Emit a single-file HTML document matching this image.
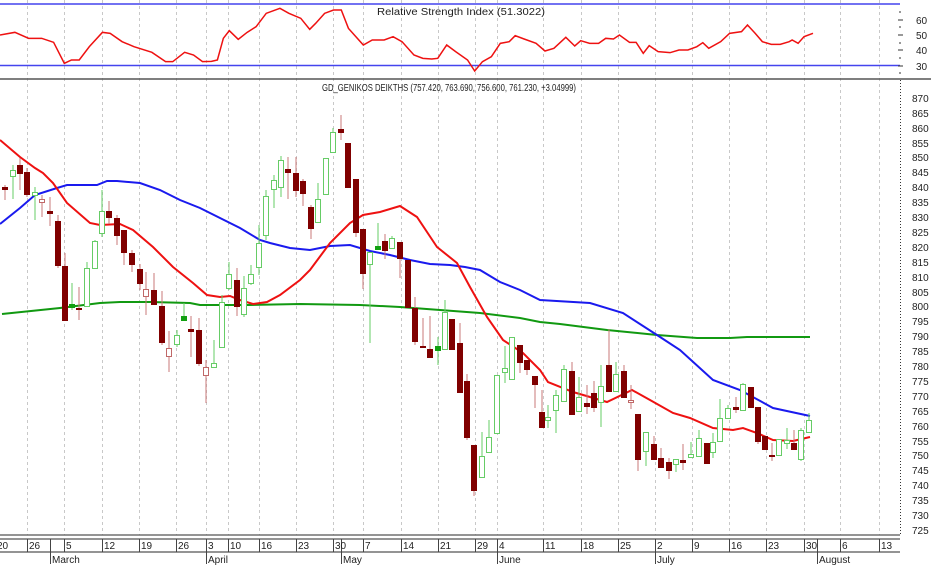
<!DOCTYPE html>
<html><head><meta charset="utf-8"><style>
html,body{margin:0;padding:0;background:#fff;}
svg{display:block;font-family:"Liberation Sans",sans-serif;}
.lbl{font-size:10px;fill:#222;}
.d{fill:#800000;stroke:#800000;stroke-width:1}
.g{fill:#fff;stroke:#66cc66;stroke-width:1}
.gf{fill:#11a011;stroke:#11a011;stroke-width:1}
.p{fill:#fff;stroke:#c06868;stroke-width:1}
.wd{stroke:#c87878;stroke-width:1}
.wg{stroke:#66cc66;stroke-width:1}
</style></head><body>
<svg width="931" height="566" viewBox="0 0 931 566" xmlns="http://www.w3.org/2000/svg">
<rect width="931" height="566" fill="#fff"/>
<!-- grid -->
<g stroke="#c8c8c8" stroke-width="1" stroke-dasharray="3,3">
<line x1="27.5" y1="0" x2="27.5" y2="535"/><line x1="64.5" y1="0" x2="64.5" y2="535"/><line x1="102.5" y1="0" x2="102.5" y2="535"/><line x1="139.5" y1="0" x2="139.5" y2="535"/><line x1="176.5" y1="0" x2="176.5" y2="535"/><line x1="206.5" y1="0" x2="206.5" y2="535"/><line x1="228.5" y1="0" x2="228.5" y2="535"/><line x1="259.5" y1="0" x2="259.5" y2="535"/><line x1="296.5" y1="0" x2="296.5" y2="535"/><line x1="333.5" y1="0" x2="333.5" y2="535"/><line x1="363.5" y1="0" x2="363.5" y2="535"/><line x1="401.5" y1="0" x2="401.5" y2="535"/><line x1="438.5" y1="0" x2="438.5" y2="535"/><line x1="475.5" y1="0" x2="475.5" y2="535"/><line x1="497.5" y1="0" x2="497.5" y2="535"/><line x1="543.5" y1="0" x2="543.5" y2="535"/><line x1="581.5" y1="0" x2="581.5" y2="535"/><line x1="618.5" y1="0" x2="618.5" y2="535"/><line x1="655.5" y1="0" x2="655.5" y2="535"/><line x1="692.5" y1="0" x2="692.5" y2="535"/><line x1="729.5" y1="0" x2="729.5" y2="535"/><line x1="766.5" y1="0" x2="766.5" y2="535"/><line x1="804.5" y1="0" x2="804.5" y2="535"/><line x1="840.5" y1="0" x2="840.5" y2="535"/><line x1="879.5" y1="0" x2="879.5" y2="535"/>
</g>
<!-- RSI panel -->
<line x1="0" y1="4" x2="900" y2="4" stroke="#4444ee" stroke-width="1.5"/>
<line x1="0" y1="65.5" x2="900" y2="65.5" stroke="#4444ee" stroke-width="1.5"/>
<line x1="0" y1="79" x2="931" y2="79" stroke="#555" stroke-width="1.5"/>
<text x="461" y="15" class="lbl" text-anchor="middle" textLength="168" lengthAdjust="spacingAndGlyphs">Relative Strength Index (51.3022)</text>
<g transform="scale(0.5956,0.3333)">
<polyline fill="none" stroke="#ee1111" stroke-width="1.5" vector-effect="non-scaling-stroke" points="0,105 25,97 48,115 70,115 90,127 108,190 120,180 133,180 150,140 172,97 185,100 205,125 225,140 255,157 278,185 290,185 310,157 325,165 340,185 355,184 365,180 375,115 385,92 400,118 415,97 430,80 447,40 470,25 485,40 505,55 520,88 530,70 545,40 560,30 573,30 585,85 610,135 625,120 645,120 660,110 675,125 695,165 710,175 725,177 735,175 750,135 765,155 785,180 797,213 810,185 825,170 840,130 855,125 865,107 880,117 900,130 915,153 930,145 950,112 965,138 975,122 990,130 1005,130 1017,115 1030,117 1040,105 1057,127 1068,127 1080,160 1090,137 1105,155 1125,158 1140,150 1155,150 1170,140 1180,128 1190,145 1210,125 1225,100 1245,95 1255,75 1268,100 1280,125 1295,133 1310,133 1325,125 1330,120 1340,130 1350,110 1365,100"/>
</g>
<g class="lbl" text-anchor="start">
<text x="916" y="24">60</text><text x="916" y="39">50</text><text x="916" y="54">40</text><text x="916" y="70">30</text>
</g>
<g stroke="#333" stroke-width="1">
<line x1="898" y1="20" x2="903" y2="20"/><line x1="898" y1="35" x2="903" y2="35"/><line x1="898" y1="50" x2="903" y2="50"/><line x1="898" y1="66" x2="903" y2="66"/>
<line x1="899" y1="12" x2="901" y2="12"/><line x1="899" y1="27" x2="901" y2="27"/><line x1="899" y1="43" x2="901" y2="43"/><line x1="899" y1="58" x2="901" y2="58"/><line x1="899" y1="73" x2="901" y2="73"/>
</g>
<!-- main title -->
<text x="449" y="91" class="lbl" text-anchor="middle" textLength="254" lengthAdjust="spacingAndGlyphs">GD_GENIKOS DEIKTHS (757.420, 763.690, 756.600, 761.230, +3.04999)</text>
<!-- price axis -->
<line x1="900.5" y1="80" x2="900.5" y2="535" stroke="#333" stroke-width="1" stroke-dasharray="1,2"/>
<g class="lbl">
<text x="912" y="102">870</text><text x="912" y="117">865</text><text x="912" y="132">860</text><text x="912" y="147">855</text><text x="912" y="161">850</text><text x="912" y="176">845</text><text x="912" y="191">840</text><text x="912" y="206">835</text><text x="912" y="221">830</text><text x="912" y="236">825</text><text x="912" y="251">820</text><text x="912" y="266">815</text><text x="912" y="281">810</text><text x="912" y="296">805</text><text x="912" y="310">800</text><text x="912" y="325">795</text><text x="912" y="340">790</text><text x="912" y="355">785</text><text x="912" y="370">780</text><text x="912" y="385">775</text><text x="912" y="400">770</text><text x="912" y="415">765</text><text x="912" y="430">760</text><text x="912" y="445">755</text><text x="912" y="459">750</text><text x="912" y="474">745</text><text x="912" y="489">740</text><text x="912" y="504">735</text><text x="912" y="519">730</text><text x="912" y="534">725</text>
</g>
<!-- moving averages -->
<polyline fill="none" stroke="#119911" stroke-width="2" points="2,314 60,308 100,303 120,302 150,302 190,303 200,305 250,305 300,304 360,305 400,307 440,310 480,313 520,318 540,322 560,324 607,330 657,335 697,338 730,338 747,337 810,337"/>
<polyline fill="none" stroke="#1a1aee" stroke-width="2" points="0,224 20,208 35,195 57,188 67,185 97,185 107,181 117,181 140,183 160,190 180,200 200,208 220,218 240,228 260,240 270,243 290,248 310,250 330,246 350,245 370,251 390,255 410,260 430,264 450,265 465,267 480,270 500,282 520,290 540,300 590,303 623,313 657,335 680,350 713,380 740,390 773,408 810,416"/>
<polyline fill="none" stroke="#ee1111" stroke-width="2" points="0,140 20,157 35,168 43,173 53,183 67,203 90,223 100,225 120,224 133,230 153,247 173,267 193,283 207,295 220,297 230,296 240,300 253,304 267,302 280,295 300,280 310,270 330,243 350,223 363,215 380,212 400,206 417,217 437,247 457,263 470,287 487,317 503,340 523,353 540,370 548,382 573,392 607,402 632,390 650,400 673,413 690,418 713,428 733,430 743,428 757,433 773,440 793,441 810,437"/>
<!-- candles -->
<g>
<line class="wd" x1="5" y1="185" x2="5" y2="200"/><rect class="d" x="2.5" y="187.5" width="5" height="2"/>
<line class="wg" x1="13" y1="165" x2="13" y2="199"/><rect class="g" x="10.5" y="170.5" width="5" height="6"/>
<line class="wd" x1="20" y1="158" x2="20" y2="190"/><rect class="d" x="17.5" y="165.5" width="5" height="8"/>
<line class="wd" x1="27" y1="168" x2="27" y2="197"/><rect class="d" x="24.5" y="172.5" width="5" height="22"/>
<line class="wg" x1="35" y1="187" x2="35" y2="220"/><rect class="g" x="32.5" y="192.5" width="5" height="3"/>
<line class="wd" x1="42" y1="195" x2="42" y2="217"/><rect class="p" x="39.5" y="199.5" width="5" height="3"/>
<line class="wd" x1="50" y1="197" x2="50" y2="226"/><rect class="d" x="47.5" y="211.5" width="5" height="2"/>
<line class="wd" x1="58" y1="215" x2="58" y2="268"/><rect class="d" x="55.5" y="221.5" width="5" height="44"/>
<line class="wd" x1="65" y1="253" x2="65" y2="321"/><rect class="d" x="62.5" y="266.5" width="5" height="54"/>
<line class="wg" x1="72" y1="283" x2="72" y2="310"/><rect class="gf" x="69.5" y="304.5" width="5" height="3"/>
<line class="wd" x1="79" y1="287" x2="79" y2="320"/><rect class="d" x="76.5" y="308.5" width="5" height="1"/>
<line class="wg" x1="87" y1="262" x2="87" y2="307"/><rect class="g" x="84.5" y="268.5" width="5" height="38"/>
<line class="wg" x1="95" y1="240" x2="95" y2="268"/><rect class="g" x="92.5" y="241.5" width="5" height="27"/>
<line class="wg" x1="102" y1="190" x2="102" y2="237"/><rect class="g" x="99.5" y="211.5" width="5" height="22"/>
<line class="wd" x1="109" y1="201" x2="109" y2="224"/><rect class="d" x="106.5" y="211.5" width="5" height="6"/>
<line class="wd" x1="117" y1="215" x2="117" y2="245"/><rect class="d" x="114.5" y="218.5" width="5" height="17"/>
<line class="wd" x1="124" y1="230" x2="124" y2="265"/><rect class="d" x="121.5" y="230.5" width="5" height="22"/>
<line class="wd" x1="132" y1="250" x2="132" y2="272"/><rect class="d" x="129.5" y="253.5" width="5" height="11"/>
<line class="wd" x1="140" y1="264" x2="140" y2="290"/><rect class="d" x="137.5" y="269.5" width="5" height="14"/>
<line class="wd" x1="146" y1="272" x2="146" y2="315"/><rect class="p" x="143.5" y="289.5" width="5" height="7"/>
<line class="wd" x1="154" y1="273" x2="154" y2="305"/><rect class="d" x="151.5" y="290.5" width="5" height="14"/>
<line class="wd" x1="162" y1="291" x2="162" y2="345"/><rect class="d" x="159.5" y="306.5" width="5" height="36"/>
<line class="wd" x1="169" y1="331" x2="169" y2="372"/><rect class="p" x="166.5" y="348.5" width="5" height="8"/>
<line class="wg" x1="177" y1="330" x2="177" y2="347"/><rect class="g" x="174.5" y="335.5" width="5" height="9"/>
<line class="wg" x1="184" y1="303" x2="184" y2="320"/><rect class="gf" x="181.5" y="316.5" width="5" height="4"/>
<line class="wd" x1="191" y1="316" x2="191" y2="357"/><rect class="d" x="188.5" y="329.5" width="5" height="2"/>
<line class="wd" x1="199" y1="318" x2="199" y2="366"/><rect class="d" x="196.5" y="330.5" width="5" height="33"/>
<line class="wd" x1="206" y1="360" x2="206" y2="403"/><rect class="p" x="203.5" y="367.5" width="5" height="8"/>
<line class="wg" x1="214" y1="340" x2="214" y2="367"/><rect class="g" x="211.5" y="363.5" width="5" height="4"/>
<line class="wg" x1="222" y1="295" x2="222" y2="347"/><rect class="g" x="219.5" y="302.5" width="5" height="45"/>
<line class="wg" x1="229" y1="262" x2="229" y2="290"/><rect class="g" x="226.5" y="274.5" width="5" height="14"/>
<line class="wd" x1="237" y1="268" x2="237" y2="316"/><rect class="d" x="234.5" y="280.5" width="5" height="26"/>
<line class="wg" x1="244" y1="276" x2="244" y2="317"/><rect class="g" x="241.5" y="288.5" width="5" height="26"/>
<line class="wg" x1="251" y1="265" x2="251" y2="285"/><rect class="g" x="248.5" y="274.5" width="5" height="9"/>
<line class="wg" x1="259" y1="225" x2="259" y2="275"/><rect class="g" x="256.5" y="243.5" width="5" height="24"/>
<line class="wg" x1="266" y1="190" x2="266" y2="240"/><rect class="g" x="263.5" y="196.5" width="5" height="39"/>
<line class="wg" x1="274" y1="175" x2="274" y2="208"/><rect class="g" x="271.5" y="180.5" width="5" height="9"/>
<line class="wg" x1="281" y1="156" x2="281" y2="197"/><rect class="g" x="278.5" y="160.5" width="5" height="27"/>
<line class="wd" x1="288" y1="157" x2="288" y2="199"/><rect class="d" x="285.5" y="169.5" width="5" height="3"/>
<line class="wd" x1="296" y1="157" x2="296" y2="197"/><rect class="d" x="293.5" y="173.5" width="5" height="17"/>
<line class="wd" x1="303" y1="179" x2="303" y2="206"/><rect class="d" x="300.5" y="181.5" width="5" height="12"/>
<line class="wd" x1="311" y1="205" x2="311" y2="239"/><rect class="d" x="308.5" y="207.5" width="5" height="21"/>
<line class="wg" x1="318" y1="183" x2="318" y2="222"/><rect class="g" x="315.5" y="199.5" width="5" height="23"/>
<line class="wg" x1="326" y1="158" x2="326" y2="194"/><rect class="g" x="323.5" y="158.5" width="5" height="36"/>
<line class="wg" x1="333" y1="128" x2="333" y2="152"/><rect class="g" x="330.5" y="132.5" width="5" height="20"/>
<line class="wd" x1="341" y1="115" x2="341" y2="140"/><rect class="d" x="338.5" y="129.5" width="5" height="3"/>
<line class="wd" x1="348" y1="143" x2="348" y2="187"/><rect class="d" x="345.5" y="143.5" width="5" height="44"/>
<line class="wd" x1="356" y1="179" x2="356" y2="237"/><rect class="d" x="353.5" y="179.5" width="5" height="53"/>
<line class="wd" x1="363" y1="229" x2="363" y2="289"/><rect class="d" x="360.5" y="229.5" width="5" height="44"/>
<line class="wg" x1="370" y1="252" x2="370" y2="343"/><rect class="g" x="367.5" y="252.5" width="5" height="12"/>
<line class="wg" x1="378" y1="223" x2="378" y2="250"/><rect class="gf" x="375.5" y="246.5" width="5" height="3"/>
<line class="wd" x1="385" y1="234" x2="385" y2="259"/><rect class="d" x="382.5" y="241.5" width="5" height="9"/>
<line class="wg" x1="392" y1="236" x2="392" y2="248"/><rect class="g" x="389.5" y="238.5" width="5" height="10"/>
<line class="wd" x1="400" y1="242" x2="400" y2="278"/><rect class="d" x="397.5" y="242.5" width="5" height="16"/>
<line class="wd" x1="408" y1="260" x2="408" y2="307"/><rect class="d" x="405.5" y="260.5" width="5" height="47"/>
<line class="wd" x1="415" y1="297" x2="415" y2="345"/><rect class="d" x="412.5" y="308.5" width="5" height="33"/>
<line class="wd" x1="423" y1="318" x2="423" y2="348"/><rect class="d" x="420.5" y="346.5" width="5" height="1"/>
<line class="wd" x1="430" y1="316" x2="430" y2="358"/><rect class="d" x="427.5" y="349.5" width="5" height="8"/>
<line class="wg" x1="438" y1="337" x2="438" y2="365"/><rect class="gf" x="435.5" y="346.5" width="5" height="4"/>
<line class="wg" x1="445" y1="300" x2="445" y2="349"/><rect class="g" x="442.5" y="312.5" width="5" height="37"/>
<line class="wd" x1="452" y1="319" x2="452" y2="349"/><rect class="d" x="449.5" y="319.5" width="5" height="30"/>
<line class="wd" x1="460" y1="323" x2="460" y2="392"/><rect class="d" x="457.5" y="343.5" width="5" height="49"/>
<line class="wd" x1="467" y1="374" x2="467" y2="440"/><rect class="d" x="464.5" y="381.5" width="5" height="56"/>
<line class="wd" x1="474" y1="445" x2="474" y2="496"/><rect class="d" x="471.5" y="445.5" width="5" height="45"/>
<line class="wg" x1="482" y1="432" x2="482" y2="477"/><rect class="g" x="479.5" y="456.5" width="5" height="21"/>
<line class="wg" x1="489" y1="420" x2="489" y2="452"/><rect class="g" x="486.5" y="437.5" width="5" height="15"/>
<line class="wg" x1="497" y1="375" x2="497" y2="433"/><rect class="g" x="494.5" y="375.5" width="5" height="58"/>
<line class="wg" x1="505" y1="346" x2="505" y2="383"/><rect class="g" x="502.5" y="368.5" width="5" height="4"/>
<line class="wg" x1="512" y1="337" x2="512" y2="379"/><rect class="g" x="509.5" y="337.5" width="5" height="42"/>
<line class="wd" x1="520" y1="345" x2="520" y2="373"/><rect class="d" x="517.5" y="345.5" width="5" height="17"/>
<line class="wd" x1="527" y1="360" x2="527" y2="375"/><rect class="d" x="524.5" y="360.5" width="5" height="9"/>
<line class="wd" x1="535" y1="376" x2="535" y2="408"/><rect class="d" x="532.5" y="376.5" width="5" height="8"/>
<line class="wd" x1="542" y1="390" x2="542" y2="427"/><rect class="d" x="539.5" y="412.5" width="5" height="15"/>
<line class="wg" x1="548" y1="405" x2="548" y2="428"/><rect class="g" x="545.5" y="417.5" width="5" height="3"/>
<line class="wg" x1="556" y1="390" x2="556" y2="433"/><rect class="g" x="553.5" y="395.5" width="5" height="15"/>
<line class="wg" x1="564" y1="365" x2="564" y2="401"/><rect class="g" x="561.5" y="369.5" width="5" height="32"/>
<line class="wd" x1="572" y1="362" x2="572" y2="414"/><rect class="d" x="569.5" y="371.5" width="5" height="43"/>
<line class="wg" x1="579" y1="377" x2="579" y2="412"/><rect class="g" x="576.5" y="397.5" width="5" height="14"/>
<line class="wd" x1="587" y1="385" x2="587" y2="414"/><rect class="d" x="584.5" y="403.5" width="5" height="3"/>
<line class="wd" x1="594" y1="381" x2="594" y2="412"/><rect class="d" x="591.5" y="393.5" width="5" height="14"/>
<line class="wg" x1="601" y1="365" x2="601" y2="427"/><rect class="g" x="598.5" y="386.5" width="5" height="16"/>
<line class="wd" x1="609" y1="329" x2="609" y2="392"/><rect class="d" x="606.5" y="365.5" width="5" height="26"/>
<line class="wg" x1="616" y1="362" x2="616" y2="391"/><rect class="g" x="613.5" y="374.5" width="5" height="17"/>
<line class="wd" x1="624" y1="365" x2="624" y2="397"/><rect class="d" x="621.5" y="371.5" width="5" height="26"/>
<line class="wd" x1="631" y1="385" x2="631" y2="409"/><rect class="p" x="628.5" y="400.5" width="5" height="2"/>
<line class="wd" x1="638" y1="414" x2="638" y2="471"/><rect class="d" x="635.5" y="414.5" width="5" height="45"/>
<line class="wg" x1="646" y1="432" x2="646" y2="466"/><rect class="g" x="643.5" y="432.5" width="5" height="19"/>
<line class="wd" x1="654" y1="436" x2="654" y2="459"/><rect class="d" x="651.5" y="444.5" width="5" height="15"/>
<line class="wd" x1="661" y1="448" x2="661" y2="467"/><rect class="d" x="658.5" y="458.5" width="5" height="9"/>
<line class="wd" x1="669" y1="458" x2="669" y2="479"/><rect class="d" x="666.5" y="462.5" width="5" height="8"/>
<line class="wg" x1="676" y1="459" x2="676" y2="472"/><rect class="g" x="673.5" y="459.5" width="5" height="5"/>
<line class="wd" x1="683" y1="444" x2="683" y2="470"/><rect class="d" x="680.5" y="460.5" width="5" height="2"/>
<line class="wg" x1="691" y1="442" x2="691" y2="457"/><rect class="g" x="688.5" y="454.5" width="5" height="3"/>
<line class="wg" x1="699" y1="430" x2="699" y2="456"/><rect class="g" x="696.5" y="438.5" width="5" height="18"/>
<line class="wd" x1="707" y1="443" x2="707" y2="463"/><rect class="d" x="704.5" y="443.5" width="5" height="20"/>
<line class="wg" x1="713" y1="433" x2="713" y2="458"/><rect class="g" x="710.5" y="442.5" width="5" height="10"/>
<line class="wg" x1="720" y1="399" x2="720" y2="441"/><rect class="g" x="717.5" y="418.5" width="5" height="23"/>
<line class="wg" x1="728" y1="405" x2="728" y2="418"/><rect class="g" x="725.5" y="408.5" width="5" height="10"/>
<line class="wd" x1="736" y1="397" x2="736" y2="413"/><rect class="d" x="733.5" y="407.5" width="5" height="2"/>
<line class="wg" x1="743" y1="383" x2="743" y2="410"/><rect class="g" x="740.5" y="384.5" width="5" height="26"/>
<line class="wd" x1="751" y1="387" x2="751" y2="407"/><rect class="d" x="748.5" y="387.5" width="5" height="20"/>
<line class="wd" x1="758" y1="407" x2="758" y2="444"/><rect class="d" x="755.5" y="407.5" width="5" height="34"/>
<line class="wd" x1="765" y1="436" x2="765" y2="449"/><rect class="d" x="762.5" y="436.5" width="5" height="13"/>
<line class="wd" x1="772" y1="443" x2="772" y2="461"/><rect class="d" x="769.5" y="455.5" width="5" height="1"/>
<line class="wg" x1="779" y1="439" x2="779" y2="455"/><rect class="g" x="776.5" y="439.5" width="5" height="16"/>
<line class="wg" x1="787" y1="428" x2="787" y2="449"/><rect class="g" x="784.5" y="440.5" width="5" height="3"/>
<line class="wd" x1="794" y1="430" x2="794" y2="449"/><rect class="d" x="791.5" y="443.5" width="5" height="6"/>
<line class="wg" x1="801" y1="428" x2="801" y2="461"/><rect class="g" x="798.5" y="430.5" width="5" height="29"/>
<line class="wg" x1="809" y1="413" x2="809" y2="432"/><rect class="g" x="806.5" y="420.5" width="5" height="12"/>
</g>
<!-- date axis -->
<line x1="0" y1="535" x2="900" y2="535" stroke="#555" stroke-width="1.2"/>
<line x1="0" y1="539" x2="900" y2="539" stroke="#555" stroke-width="1.2"/>
<line x1="0" y1="552" x2="900" y2="552" stroke="#555" stroke-width="1.2"/>
<g stroke="#444" stroke-width="1">
<line x1="27.5" y1="539" x2="27.5" y2="552"/><line x1="50.5" y1="539" x2="50.5" y2="564"/><line x1="64.5" y1="539" x2="64.5" y2="552"/><line x1="102.5" y1="539" x2="102.5" y2="552"/><line x1="139.5" y1="539" x2="139.5" y2="552"/><line x1="176.5" y1="539" x2="176.5" y2="552"/><line x1="206.5" y1="539" x2="206.5" y2="564"/><line x1="228.5" y1="539" x2="228.5" y2="552"/><line x1="259.5" y1="539" x2="259.5" y2="552"/><line x1="296.5" y1="539" x2="296.5" y2="552"/><line x1="333.5" y1="539" x2="333.5" y2="552"/><line x1="341.5" y1="539" x2="341.5" y2="564"/><line x1="363.5" y1="539" x2="363.5" y2="552"/><line x1="401.5" y1="539" x2="401.5" y2="552"/><line x1="438.5" y1="539" x2="438.5" y2="552"/><line x1="475.5" y1="539" x2="475.5" y2="552"/><line x1="497.5" y1="539" x2="497.5" y2="564"/><line x1="543.5" y1="539" x2="543.5" y2="552"/><line x1="581.5" y1="539" x2="581.5" y2="552"/><line x1="618.5" y1="539" x2="618.5" y2="552"/><line x1="655.5" y1="539" x2="655.5" y2="564"/><line x1="692.5" y1="539" x2="692.5" y2="552"/><line x1="729.5" y1="539" x2="729.5" y2="552"/><line x1="766.5" y1="539" x2="766.5" y2="552"/><line x1="804.5" y1="539" x2="804.5" y2="552"/><line x1="817.5" y1="539" x2="817.5" y2="564"/><line x1="840.5" y1="539" x2="840.5" y2="552"/><line x1="879.5" y1="539" x2="879.5" y2="552"/>
</g>
<g class="lbl">
<text x="-3" y="549">20</text><text x="29" y="549">26</text><text x="66" y="549">5</text><text x="104" y="549">12</text><text x="141" y="549">19</text><text x="178" y="549">26</text><text x="208" y="549">3</text><text x="230" y="549">10</text><text x="261" y="549">16</text><text x="298" y="549">23</text><text x="335" y="549">30</text><text x="365" y="549">7</text><text x="403" y="549">14</text><text x="440" y="549">21</text><text x="477" y="549">29</text><text x="499" y="549">4</text><text x="545" y="549">11</text><text x="583" y="549">18</text><text x="620" y="549">25</text><text x="657" y="549">2</text><text x="694" y="549">9</text><text x="731" y="549">16</text><text x="768" y="549">23</text><text x="806" y="549">30</text><text x="842" y="549">6</text><text x="881" y="549">13</text>
<text x="52" y="563">March</text><text x="208" y="563">April</text><text x="343" y="563">May</text><text x="499" y="563">June</text><text x="657" y="563">July</text><text x="819" y="563">August</text>
</g>
</svg>
</body></html>
